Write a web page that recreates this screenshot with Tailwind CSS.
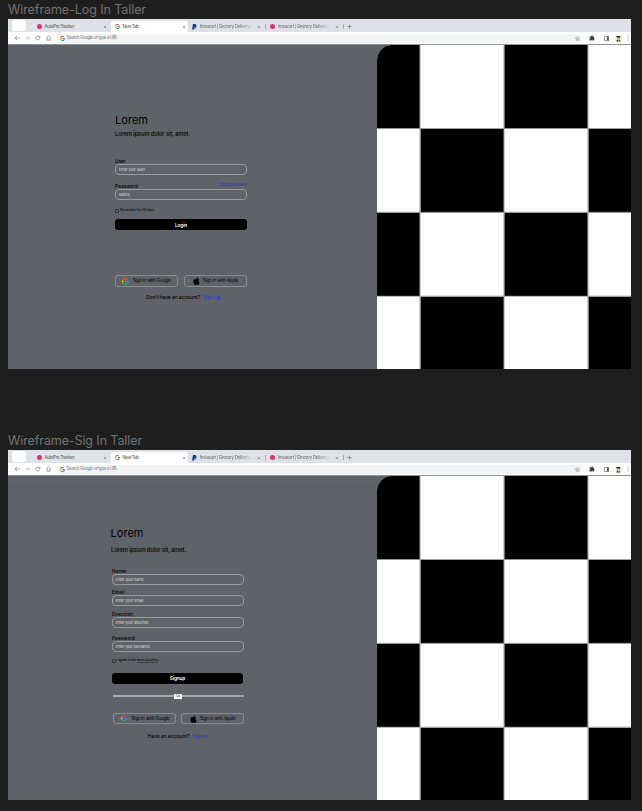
<!DOCTYPE html>
<html lang="en">
<head>
<meta charset="utf-8">
<title>Wireframes</title>
<script src="https://cdn.jsdelivr.net/npm/@tailwindcss/browser@4"></script>
</head>
<body class="bg-[#1e1e1e] w-[642px] h-[811px] overflow-hidden font-[Inter,sans-serif] pl-2 text-black">

<svg class="hidden">
  <symbol id="google" viewBox="0 0 48 48"><path fill="#EA4335" d="M24 9.500c3.540 0 6.710 1.220 9.210 3.600l6.850-6.850C35.900 2.380 30.470 0 24 0 14.620 0 6.510 5.380 2.560 13.220l7.980 6.190C12.430 13.720 17.740 9.500 24 9.500z"/><path fill="#4285F4" d="M46.980 24.550c0-1.570-.15-3.090-.38-4.550H24v9.020h12.940c-.58 2.960-2.260 5.480-4.780 7.180l7.730 6c4.510-4.180 7.090-10.360 7.090-17.650z"/><path fill="#FBBC05" d="M10.530 28.590A14.500 14.500 0 0 1 9.770 24c0-1.600.27-3.140.76-4.590l-7.980-6.190A23.900 23.900 0 0 0 0 24c0 3.880.92 7.540 2.560 10.780z"/><path fill="#34A853" d="M24 48c6.480 0 11.930-2.130 15.890-5.810l-7.730-6c-2.150 1.450-4.920 2.300-8.160 2.300-6.260 0-11.570-4.220-13.470-9.910l-7.980 6.190C6.510 42.620 14.620 48 24 48z"/></symbol>
  <symbol id="apple" viewBox="3 1 17 22"><path d="M17.050 12.600c0-2.600 2.100-3.800 2.200-3.900-1.200-1.800-3.100-2-3.800-2-1.600-.2-3.100.9-3.900.9s-2.100-.9-3.400-.9C6.400 6.700 4.700 7.700 3.800 9.300c-1.900 3.300-.5 8.100 1.300 10.700.9 1.300 2 2.700 3.400 2.700s1.900-.9 3.500-.9 2.100.9 3.500.8c1.500 0 2.400-1.300 3.300-2.600 1-1.500 1.400-2.900 1.500-3-.1 0-3.200-1.200-3.250-4.400zM14.400 4.800c.8-.9 1.300-2.200 1.100-3.500-1.100.1-2.400.7-3.200 1.700-.7.800-1.300 2.100-1.100 3.300 1.200.1 2.500-.6 3.200-1.500z"/></symbol>
  <symbol id="close" viewBox="0 0 4 4"><path d="M.8.800l2.400 2.400M3.200.800L.8 3.200" stroke="#777" stroke-width=".6"/></symbol>
  <symbol id="checks" viewBox="0 0 254 324">
    <path fill="#fff" d="M0 0h254v324H0z"/>
    <path d="M0 0h42.800v83.300H0zM127.400 0h83.300v83.300h-83.300zM43.600 84h83.200v83.300H43.600zM211.500 84H254v83.300h-42.500zM0 167.800h42.800v83.300H0zM127.400 167.800h83.300v83.300h-83.300zM43.600 251.700h83.200V324H43.600zM211.500 251.700H254V324h-42.500z"/>
    <path d="M43 0v324M127 0v324M211 0v324M0 83.500h254M0 167.300h254M0 251.200h254" stroke="#888" stroke-width=".8" fill="none"/>
  </symbol>
</svg>

<template id="browser">
  <div class="h-[13px] bg-[#dee1e6] flex items-end text-[4.600px] text-[#555] leading-none whitespace-nowrap">
    <div class="ml-1 mb-[1.500px] w-[14px] h-[10.500px] rounded-[3px] bg-white"></div>
    <div class="ml-[10.500px] w-[74.500px] h-[11px] flex items-center"><i class="size-[5px] rounded-full bg-[#dd2f74]"></i><span class="ml-[3px] pt-[2px]" data-w="29.500">AutoPro Tracker</span><svg class="ml-auto mr-1 size-1"><use href="#close"/></svg></div>
    <div class="w-[77px] h-[11px] bg-white rounded-t-[3px] flex items-center pl-1"><svg class="size-[5px]"><use href="#google"/></svg><span class="ml-[2.500px] pt-[2px]" data-w="16">New Tab</span><svg class="ml-auto mr-[2px] size-1"><use href="#close"/></svg></div>
    <div class="w-[78px] h-[11px] flex items-center pl-1"><svg class="w-[5px] h-[6px]" viewBox="0 0 10 12"><path fill="#179bd7" d="M4 3h4q2 1 1 4-1 2-4 2L4 12H2z"/><path fill="#253b80" d="M2 0h4q4 1 2 5-1 2-4 2l-1 4H0z"/></svg><span class="ml-[3px] w-[53px] overflow-hidden bg-linear-to-r from-[#666] from-75% to-transparent bg-clip-text text-transparent leading-[7px]"><span data-w="53">Instacart | Grocery Delivery o</span></span><svg class="ml-auto mr-1 size-1"><use href="#close"/></svg><i class="w-px h-[5px] bg-[#aaa]"></i></div>
    <div class="w-[78px] h-[11px] flex items-center pl-1"><i class="size-[5px] rounded-full bg-[#dd2f74]"></i><span class="ml-[3px] w-[53px] overflow-hidden bg-linear-to-r from-[#666] from-75% to-transparent bg-clip-text text-transparent leading-[7px]"><span data-w="53">Instacart | Grocery Delivery o</span></span><svg class="ml-auto mr-1 size-1"><use href="#close"/></svg><i class="w-px h-[5px] bg-[#aaa]"></i></div>
    <svg class="ml-[3px] mb-[3px] size-[5px]" viewBox="0 0 5 5"><path d="M2.500.5v4M.5 2.500h4" stroke="#777" stroke-width=".7"/></svg>
  </div>
  <div class="h-[12px] bg-white flex items-center pl-[6px]">
    <svg class="shrink-0 w-[38px] h-[6px]" viewBox="0 0 38 6" fill="none" stroke-width=".6"><path stroke="#666" d="M5.500 3h-4.500M3 1L1 3l2 2"/><path stroke="#aaa" d="M11 3h4.500M13.500 1l2 2-2 2"/><path stroke="#666" d="M25.500 1.800A2 2 0 1 0 25.700 3.600M26 .7v1.700h-1.700M32.200 3l2.300-2.200L36.800 3M33 2.600v2.600h3V2.600"/></svg>
    <div class="shrink-0 ml-1 w-[526px] h-[9px] rounded-full bg-[#f1f3f4] flex items-center pl-[3.500px] pr-[2px]"><svg class="size-[5px]"><use href="#google"/></svg><span class="ml-[2px] pt-px text-[4.500px] leading-none text-[#777] whitespace-nowrap" data-w="51">Search Google or type a URL</span>
    <svg class="ml-auto size-[5px]" viewBox="0 0 10 10"><path d="M5 1l1.200 2.800 3 .2-2.300 2 .8 3L5 7.400 2.300 9l.8-3L.8 4l3-.2z" fill="none" stroke="#777"/></svg></div>
    <svg class="shrink-0 ml-[7px] size-[6px]" viewBox="0 0 12 12"><path fill="#444" d="M1 3h3a2 1.800 0 0 1 4 0h2v3a1.600 1.600 0 0 1 0 3v2H7.500a1.600 1.600 0 0 0-3 0H1V8a1.600 1.600 0 0 0 0-3z"/></svg>
    <svg class="shrink-0 ml-[9px] size-[5px]" viewBox="0 0 5 5"><path fill="none" stroke="#666" stroke-width=".7" d="M.4.400h4.200v4.200H.4z"/><path fill="#555" d="M3 .4h1.700v4.200H3z"/></svg>
    <svg class="shrink-0 ml-[6px] size-[7px]" viewBox="0 0 14 14"><circle cx="7" cy="7" r="7" fill="#e9eef2"/><path fill="#efb75d" d="M4 5h6v4H4z"/><path fill="#222" d="M3 5V2h7l1 3zM3 13l1-4 3 2 3-2 1 4z"/><path fill="#e5b13a" d="M6 9h3v4H7z"/></svg>
    <svg class="shrink-0 ml-[5px] w-[2px] h-[6px]" viewBox="0 0 2 6" fill="#777"><circle cx="1" cy="1" r=".5"/><circle cx="1" cy="3" r=".5"/><circle cx="1" cy="5" r=".5"/></svg>
  </div>
</template>

<h2 class="h-[19px] leading-[19px] text-[12.500px] text-[#747474] whitespace-nowrap"><span data-w="138">Wireframe-Log In Taller</span></h2>
<section class="w-[623px] h-[350px] bg-[#5f6368] flex flex-col">
  <div data-browser></div>
  <div class="flex h-[325px] border-t border-[#909396]">
    <div class="w-[369px] pl-[107px] whitespace-nowrap leading-none text-[4.800px]">
      <h1 class="mt-[67px] h-4 leading-4 text-[11px]"><span data-w="33">Lorem</span></h1>
      <p class="h-[11px] leading-[11px] text-[5.800px] font-medium"><span data-w="75">Lorem ipsum dolor sit, amet.</span></p>
      <div class="mt-[17px] h-2 leading-[10px] font-medium"><span data-w="10.500">User</span></div>
      <div class="w-[132px] h-[11px] rounded-[4px] border border-[#989b9f] pl-[3px] leading-[9px] text-[3.700px] text-[#dedede]"><span data-w="26">Enter your user!</span></div>
      <div class="mt-[6px] h-2 w-[131px] leading-[10px] flex justify-between font-medium"><span data-w="23">Password</span><a class="text-[#2340c8] text-[4px] leading-[8px]"><span data-w="28">forgot password</span></a></div>
      <div class="w-[132px] h-[11px] rounded-[4px] border border-[#989b9f] pl-[3px] leading-[9px] text-[3.700px] text-[#dedede]"><span data-w="11">Name</span></div>
      <div class="mt-[7px] h-[7px] flex items-center text-[3.600px]"><svg class="size-[4px] mr-[1px]" viewBox="0 0 4 4"><rect x=".5" y=".5" width="3" height="3" rx=".6" fill="none" stroke="#000" stroke-width=".5"/></svg><span data-w="34">Remember for 30 days</span></div>
      <button class="block mt-[5px] w-[132px] h-[11px] rounded-[3px] bg-black text-white text-[4.800px] leading-[12px] font-semibold"><span data-w="12">Login</span></button>
      <div class="mt-[45px] flex gap-[6px] text-[4.500px]">
        <div class="w-[63px] h-[12px] rounded-[3px] border border-[#888c90] flex items-center pl-[6px]"><svg class="size-[7px]"><use href="#google"/></svg><span class="ml-1 pt-px" data-w="38">Sign in with Google</span></div>
        <div class="w-[63px] h-[12px] rounded-[3px] border border-[#888c90] flex items-center pl-[8px]"><svg class="w-[7px] h-[8px]"><use href="#apple"/></svg><span class="ml-[3px] pt-px" data-w="35.500">Sign in with Apple</span></div>
      </div>
      <p class="ml-[31px] mt-[5px] h-[10px] leading-[10px] text-[5px] font-medium flex gap-[3px]"><span data-w="54">Don't have an account?</span><a class="text-[#2340c8]"><span data-w="17.500">Sign Up</span></a></p>
    </div>
    <div class="w-[254px] h-[324px] rounded-tl-[15px] overflow-hidden"><svg class="w-[254px] h-[324px]"><use href="#checks"/></svg></div>
  </div>
</section>

<h2 class="mt-[62px] h-[19px] leading-[19px] text-[12.500px] text-[#747474] whitespace-nowrap"><span data-w="134">Wireframe-Sig In Taller</span></h2>
<section class="w-[623px] h-[350px] bg-[#5f6368] flex flex-col">
  <div data-browser></div>
  <div class="flex h-[325px] border-t border-[#909396]">
    <div class="w-[369px] whitespace-nowrap leading-none text-[4.800px]">
      <div class="h-[11px] border-b border-[#595d62]"></div>
      <div class="pl-[103.500px] pt-[38px]">
      <h1 class="-ml-px h-4 leading-4 text-[11px]"><span data-w="33">Lorem</span></h1>
      <p class="-ml-[0.500px] mt-[4px] h-[10px] leading-[9px] text-[5.800px] font-medium"><span data-w="75">Lorem ipsum dolor sit, amet.</span></p>
      <div class="mt-[11px] pl-[0.500px] h-2 leading-[10px] font-medium"><span data-w="14">Name</span></div>
      <div class="w-[132px] h-[11px] rounded-[4px] border border-[#989b9f] pl-[3px] leading-[9px] text-[3.700px] text-[#dedede]"><span data-w="28">Enter your name</span></div>
      <div class="mt-[2px] pl-[0.500px] h-2 leading-[10px] font-medium"><span data-w="12.500">Email</span></div>
      <div class="w-[132px] h-[11px] rounded-[4px] border border-[#989b9f] pl-[3px] leading-[9px] text-[3.700px] text-[#dedede]"><span data-w="28">Enter your email</span></div>
      <div class="mt-[3px] pl-[0.500px] h-2 leading-[10px] font-medium"><span data-w="21">Direction</span></div>
      <div class="w-[132px] h-[11px] rounded-[4px] border border-[#989b9f] pl-[3px] leading-[9px] text-[3.700px] text-[#dedede]"><span data-w="33">Enter your direction</span></div>
      <div class="mt-[5px] pl-[0.500px] h-2 leading-[10px] font-medium"><span data-w="23">Password</span></div>
      <div class="w-[132px] h-[11px] rounded-[4px] border border-[#989b9f] pl-[3px] leading-[9px] text-[3.700px] text-[#dedede]"><span data-w="34.500">Enter your password</span></div>
      <div class="mt-[5px] h-[7px] flex items-center text-[3.600px]"><svg class="size-[4px] mr-[1px]" viewBox="0 0 4 4"><rect x=".5" y=".5" width="3" height="3" rx=".6" fill="none" stroke="#000" stroke-width=".5"/></svg><span data-w="41.500">I agree to the <u class="decoration-black/40">terms &amp; policy</u></span></div>
      <button class="block mt-[9px] ml-[0.500px] w-[131px] h-[11px] rounded-[3px] bg-black text-white text-[4.800px] leading-[11px] font-semibold"><span data-w="15.500">Signup</span></button>
      <div class="mt-[9px] ml-[1.500px] w-[130.500px] h-[6px] flex items-center"><i class="flex-1 h-[1.500px] bg-[#a6a8aa]"></i><b class="w-[8px] h-[5px] bg-white text-[3.500px] leading-[5px] text-center font-normal">Or</b><i class="flex-1 h-[1.500px] bg-[#a6a8aa]"></i></div>
      <div class="mt-[14px] ml-[1.500px] flex gap-[5px] text-[4.500px]">
        <div class="w-[63px] h-[11px] rounded-[3px] border border-[#888c90] flex items-center pl-[7px]"><svg class="size-[6.500px]"><use href="#google"/></svg><span class="ml-1 pt-px" data-w="38">Sign in with Google</span></div>
        <div class="w-[63px] h-[11px] rounded-[3px] border border-[#888c90] flex items-center pl-[8px]"><svg class="w-[7px] h-[8px]"><use href="#apple"/></svg><span class="ml-[3px] pt-px" data-w="35.500">Sign in with Apple</span></div>
      </div>
      <p class="ml-[36px] mt-[7px] h-[10px] leading-[10px] text-[5px] font-medium flex gap-[3px]"><span data-w="42">Have an account?</span><a class="text-[#2340c8]"><span data-w="15.500">Sign In</span></a></p>
      </div>
    </div>
    <div class="w-[254px] h-[324px] rounded-tl-[15px] overflow-hidden"><svg class="w-[254px] h-[324px]"><use href="#checks"/></svg></div>
  </div>
</section>

<script>
const tpl = document.getElementById('browser');
document.querySelectorAll('[data-browser]').forEach(el => el.append(tpl.content.cloneNode(true)));
// Track each label so that it fills its nominal width.
function track() {
  document.querySelectorAll('[data-w]').forEach(el => {
    el.style.letterSpacing = '0px';
    const range = document.createRange();
    range.selectNodeContents(el);
    const gap = +el.dataset.w - range.getBoundingClientRect().width;
    el.style.letterSpacing = Math.max(-1, Math.min(1, gap / el.textContent.length)) + 'px';
  });
}
track();
addEventListener('load', track);
document.fonts.ready.then(track);
new ResizeObserver(track).observe(document.body);
</script>
</body>
</html>
